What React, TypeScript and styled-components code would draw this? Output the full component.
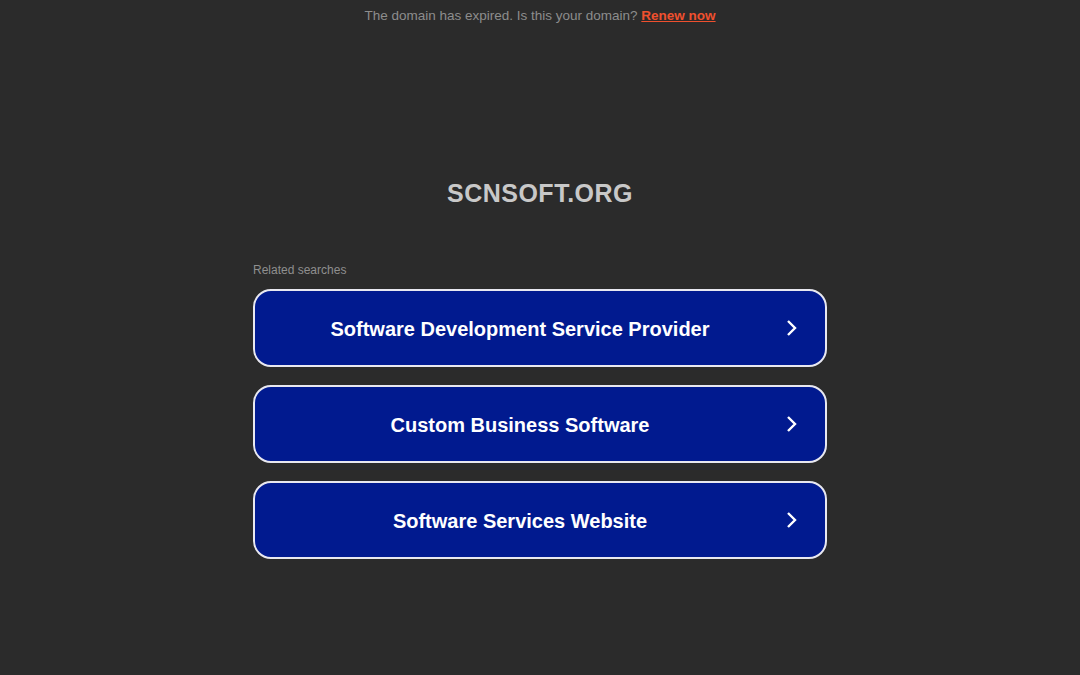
import React from 'react'
import styled, { createGlobalStyle } from 'styled-components'

const GlobalStyle = createGlobalStyle`
  html, body {
    margin: 0;
    padding: 0;
    background: #2b2b2b;
    font-family: Arial, "Liberation Sans", sans-serif;
  }
`

const searches = [
  'Software Development Service Provider',
  'Custom Business Software',
  'Software Services Website',
]

export default function App() {
  return (
    <>
      <GlobalStyle />
      <Page>
        <Notice>
          The domain has expired. Is this your domain? <RenewLink href="#">Renew now</RenewLink>
        </Notice>
        <Title>SCNSOFT.ORG</Title>
        <Related>
          <RelatedLabel>Related searches</RelatedLabel>
          <List>
            {searches.map((s) => (
              <SearchButton key={s} href="#">
                <ButtonText>{s}</ButtonText>
                <Chevron>
                  <svg width="14" height="18" viewBox="0 0 14 18">
                    <path d="M3 2 L10 9 L3 16" fill="none" stroke="#fff" strokeWidth="2.4" />
                  </svg>
                </Chevron>
              </SearchButton>
            ))}
          </List>
        </Related>
      </Page>
    </>
  )
}

const Page = styled.div`
  min-height: 675px;
  display: flex;
  flex-direction: column;
  align-items: center;
`

const Notice = styled.div`
  padding-top: 8px;
  font-size: 13.5px;
  line-height: 16px;
  color: #8d8d8d;
  text-align: center;
`

const RenewLink = styled.a`
  color: #f0502e;
  font-weight: bold;
  text-decoration: underline;
`

const Title = styled.h1`
  margin: 153px 0 0;
  font-size: 25px;
  line-height: 32px;
  letter-spacing: 0.5px;
  font-weight: bold;
  color: #c8c8c8;
`

const Related = styled.div`
  width: 574px;
  margin-top: 54px;
`

const RelatedLabel = styled.div`
  font-size: 12px;
  line-height: 14px;
  color: #8f8f8f;
`

const List = styled.div`
  margin-top: 12px;
  display: flex;
  flex-direction: column;
  gap: 18px;
`

const SearchButton = styled.a`
  box-sizing: border-box;
  height: 78px;
  display: flex;
  align-items: center;
  background: #011a8f;
  border: 2px solid #e8e8f0;
  border-radius: 18px;
  text-decoration: none;
  padding-right: 26px;
`

const ButtonText = styled.span`
  flex: 1;
  text-align: center;
  color: #fff;
  font-size: 20px;
  font-weight: bold;
  padding-top: 2px;
`

const Chevron = styled.span`
  display: flex;
  align-items: center;
`
